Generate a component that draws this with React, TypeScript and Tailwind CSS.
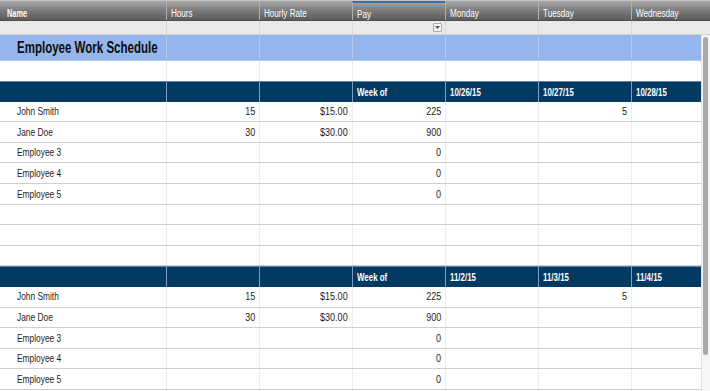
import React from "react";

const W = ["w-[166px]", "w-[93px]", "w-[93px]", "w-[93px]", "w-[93px]", "w-[93px]", "flex-1"];

function T({ children, right, cls = "" }: { children: React.ReactNode; right?: boolean; cls?: string }) {
  return (
    <span className={`inline-block whitespace-nowrap ${right ? "origin-right" : "origin-left"} ${cls}`}>{children}</span>
  );
}

const headers = ["Name", "Hours", "Hourly Rate", "Pay", "Monday", "Tuesday", "Wednesday"];

function HeaderBar() {
  return (
    <div className="flex h-[21px] bg-gradient-to-b from-[#a8a8a8] via-[#7c7c7c] to-[#5a5a5a] border-t border-t-[#c4c4c4] border-b border-[#4d4d4d]">
      {headers.map((h, i) => (
        <div
          key={h}
          className={`${i === 6 ? "flex-1" : W[i]} flex items-center pt-[5px] pl-[4px] ${i > 0 ? "border-l border-[#b0b0b0]" : "pl-[7px]"} ${i === 3 ? "border-t-2 border-t-[#3d6fa8] pt-[3px]" : ""} text-white text-[10px]`}
        >
          <T cls={i === 0 ? "font-bold scale-x-[0.74]" : "scale-x-[0.81]"}>{h}</T>
        </div>
      ))}
    </div>
  );
}

function FilterBar() {
  return (
    <div className="flex h-[14px] bg-[#e9e9e9] border-b border-[#d2d2d2]">
      {W.map((w, i) => (
        <div key={i} className={`${w} ${i > 0 ? "border-l border-[#d9d9d9]" : ""} flex items-center justify-end pr-[3px]`}>
          {i === 3 && (
            <div className="w-[9px] h-[9px] border border-[#a9a9a9] rounded-[1px] bg-[#f3f3f3] flex items-center justify-center">
              <svg width="5" height="3" viewBox="0 0 5 3">
                <path d="M0 0 L5 0 L2.5 3 Z" fill="#555" />
              </svg>
            </div>
          )}
        </div>
      ))}
    </div>
  );
}

type Row = string[];

function NavyRow({ cells }: { cells: Row }) {
  return (
    <div className="flex h-[20.6px] bg-[#023a63] border-t border-[#5f83a8]">
      {W.map((w, i) => (
        <div
          key={i}
          className={`${w} ${i > 0 ? "border-l border-[#7f9dbd]" : ""} flex items-center pl-[4px] text-white text-[11px] font-bold`}
        >
          {cells[i] && <T cls="scale-x-[0.72]">{cells[i]}</T>}
        </div>
      ))}
    </div>
  );
}

function DataRow({ cells }: { cells: Row }) {
  return (
    <div className="flex h-[20.6px] bg-white border-b border-[#cfcfcf]">
      {W.map((w, i) => (
        <div
          key={i}
          className={`${w} ${i > 0 ? "border-l border-[#ececec] justify-end pr-[4px]" : "pl-[17px]"} flex items-center text-[11px] text-[#1e1e1e]`}
        >
          {cells[i] && (
            <T right={i > 0} cls={i > 0 ? "scale-x-[0.82]" : "scale-x-[0.76]"}>
              {cells[i]}
            </T>
          )}
        </div>
      ))}
    </div>
  );
}

const rows: Row[] = [
  ["John Smith", "15", "$15.00", "225", "", "5", ""],
  ["Jane Doe", "30", "$30.00", "900", "", "", ""],
  ["Employee 3", "", "", "0", "", "", ""],
  ["Employee 4", "", "", "0", "", "", ""],
  ["Employee 5", "", "", "0", "", "", ""],
  ["", "", "", "", "", "", ""],
  ["", "", "", "", "", "", ""],
  ["", "", "", "", "", "", ""],
];

export default function App() {
  return (
    <div className="w-[710px] h-[391px] overflow-hidden bg-white" style={{ fontFamily: '"Liberation Sans", Arial, sans-serif' }}>
      <HeaderBar />
      <FilterBar />
      <div className="flex">
        <div className="w-[701px]">
          <div className="flex h-[26px] bg-[#95b6ec] border-b border-[#b7cbee]">
            {W.map((w, i) => (
              <div key={i} className={`${w} ${i > 0 ? "border-l border-[#b3c9f0]" : "pl-[17px]"} flex items-center`}>
                {i === 0 && (
                  <T cls="font-bold text-[16px] text-[#0c0c0c] scale-x-[0.72]">Employee Work Schedule</T>
                )}
              </div>
            ))}
          </div>
          <div className="flex h-[20px] bg-white">
            {W.map((w, i) => (
              <div key={i} className={`${w} ${i > 0 ? "border-l border-[#ececec]" : ""}`} />
            ))}
          </div>
          <NavyRow cells={["", "", "", "Week of", "10/26/15", "10/27/15", "10/28/15"]} />
          {rows.map((r, i) => (
            <DataRow key={`a${i}`} cells={r} />
          ))}
          <NavyRow cells={["", "", "", "Week of", "11/2/15", "11/3/15", "11/4/15"]} />
          {rows.slice(0, 6).map((r, i) => (
            <DataRow key={`b${i}`} cells={r} />
          ))}
        </div>
        <div className="flex-1 bg-[#f5f5f5] border-l border-[#e2e2e2] pt-[2px] pl-[1px]">
          <div className="w-[5px] h-[318px] rounded-full bg-[#a8a8a8]" />
        </div>
      </div>
    </div>
  );
}
